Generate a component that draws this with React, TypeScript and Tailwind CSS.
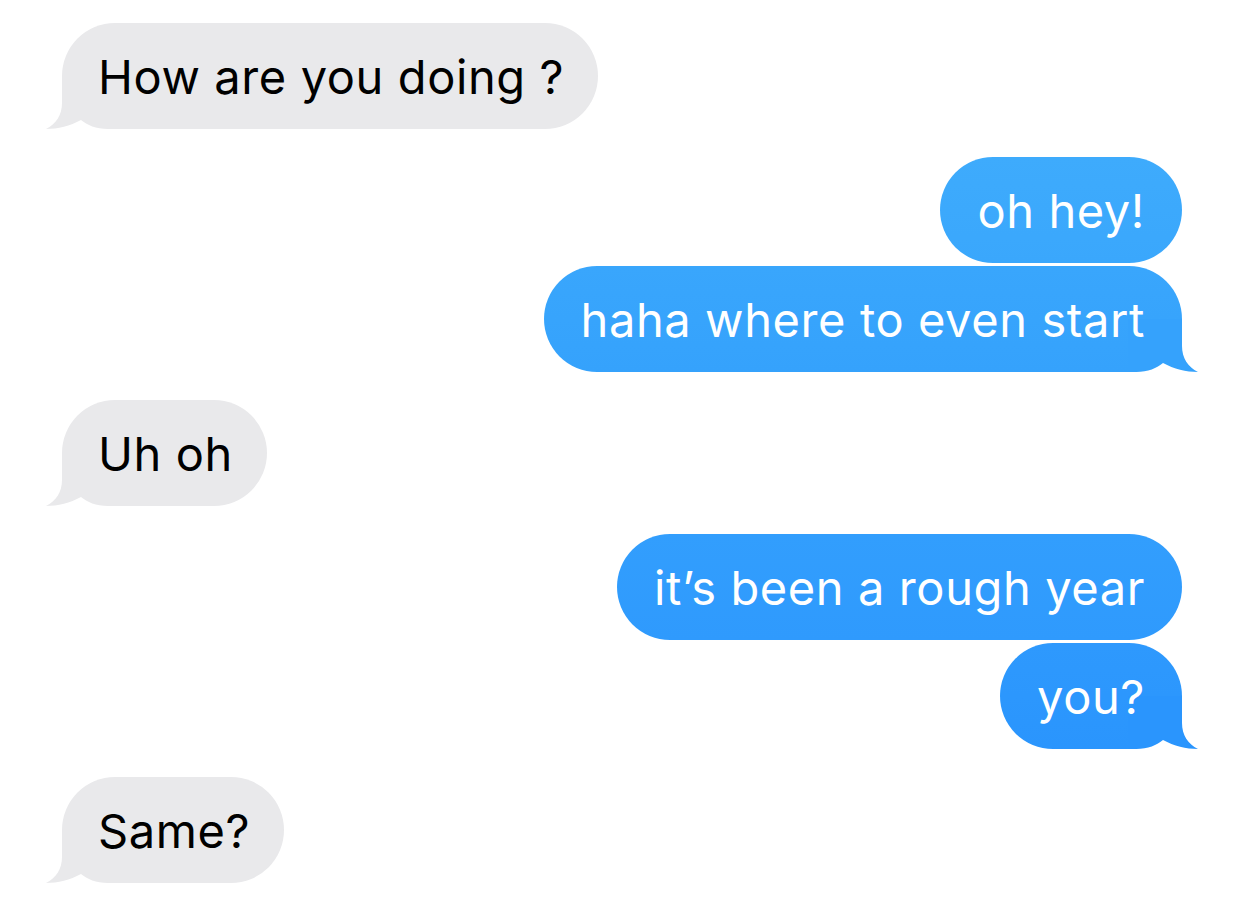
import React from "react";

type Msg = {
  text: string;
  me: boolean;
  tail: boolean;
  from?: string;
  to?: string;
};

const messages: Msg[] = [
  { text: "How are you doing ?", me: false, tail: true },
  { text: "oh hey!", me: true, tail: false, from: "#3eabfc", to: "#3aa7fc" },
  { text: "haha where to even start", me: true, tail: true, from: "#39a6fc", to: "#35a2fc" },
  { text: "Uh oh", me: false, tail: true },
  { text: "it\u2019s been a rough year", me: true, tail: false, from: "#329efd", to: "#2f9afd" },
  { text: "you?", me: true, tail: true, from: "#2e99fd", to: "#2a95fd" },
  { text: "Same?", me: false, tail: true },
];

// bubble tail, drawn from the vertical middle of the bubble down to its tip
const Tail = ({ me, color }: { me: boolean; color: string }) => (
  <svg
    width="72"
    height="53"
    viewBox="0 0 72 53"
    className={
      me
        ? "absolute right-[-18px] bottom-0 -scale-x-100"
        : "absolute left-[-18px] bottom-0"
    }
  >
    <path
      d="M18 0 L18 27 C18 39 12 48 2 53 C14 53 26 50 37 44 C43 49 52 53 64 53 L72 53 L72 0 Z"
      fill={color}
    />
  </svg>
);

const Bubble = ({ msg }: { msg: Msg }) => {
  const tailColor = msg.me ? msg.to ?? "#2a95fd" : "#e9e9eb";
  return (
    <div
      className={
        msg.me
          ? "relative h-[106px] rounded-[53px] pl-[37px] pr-[37px] flex items-center text-white"
          : "relative h-[106px] rounded-[53px] pl-[36px] pr-[34px] flex items-center text-black bg-[#e9e9eb]"
      }
      style={
        msg.me
          ? { backgroundImage: `linear-gradient(to bottom, ${msg.from}, ${msg.to})` }
          : undefined
      }
    >
      {msg.tail && <Tail me={msg.me} color={tailColor} />}
      <span className="relative whitespace-nowrap text-[47px] leading-none tracking-[0.6px]">
        {msg.text}
      </span>
    </div>
  );
};

export default function App() {
  return (
    <div
      className="w-[1242px] h-[909px] bg-white overflow-hidden pt-[23px] pl-[62px] pr-[60px] flex flex-col"
      style={{ fontFamily: "Inter, 'Liberation Sans', sans-serif" }}
    >
      {messages.map((m, i) => {
        const prev = messages[i - 1];
        const sameGroup = prev && prev.me === m.me;
        return (
          <div
            key={i}
            className={
              (i === 0 ? "" : sameGroup ? "mt-[3px] " : "mt-[28px] ") +
              (m.me ? "flex justify-end" : "flex justify-start")
            }
          >
            <Bubble msg={m} />
          </div>
        );
      })}
    </div>
  );
}
